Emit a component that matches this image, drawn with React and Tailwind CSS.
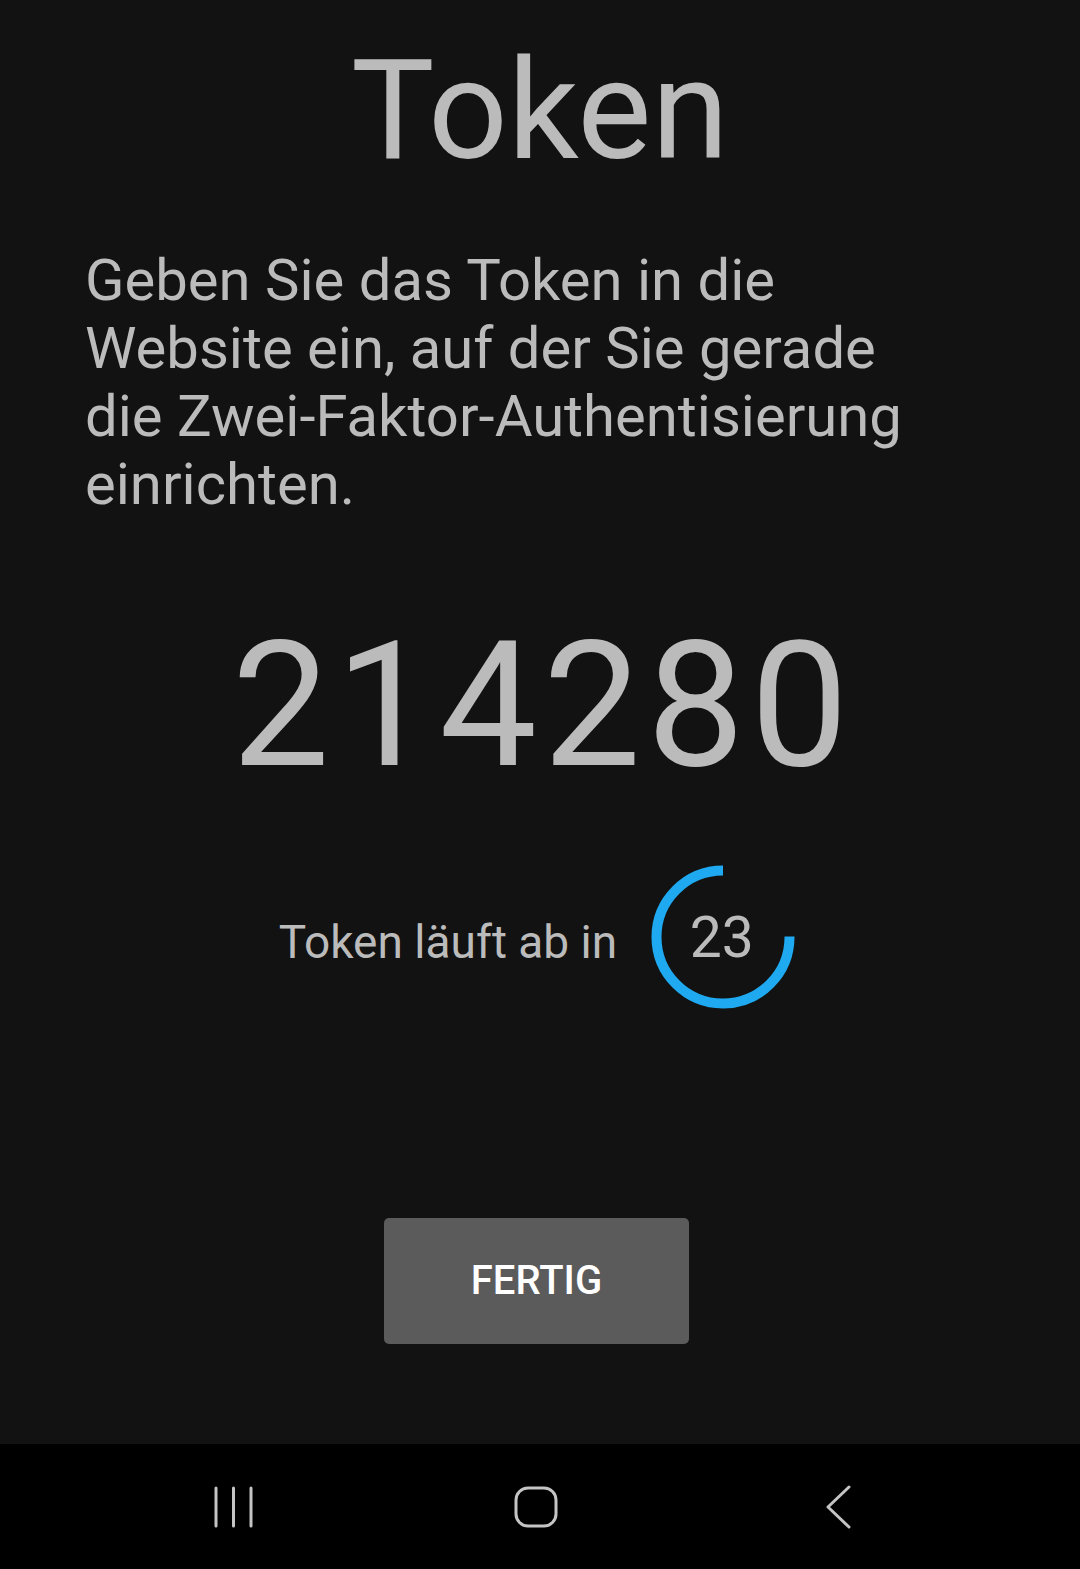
import { useState } from 'react'

const total = 30

function Countdown({ seconds }) {
  const r = 66.5
  const c = 2 * Math.PI * r
  return (
    <div className="relative w-[144px] h-[144px] shrink-0">
      <svg width="144" height="144" viewBox="0 0 144 144" className="block">
        {/* arc runs counter-clockwise from 12 o'clock */}
        <circle
          cx="72"
          cy="72"
          r={r}
          fill="none"
          stroke="#1ea9f0"
          strokeWidth="10"
          strokeDasharray={`${c * 0.75} ${c}`}
          transform="rotate(-90 72 72) scale(1 -1) translate(0 -144)"
        />
      </svg>
      <div className="absolute inset-0 flex items-center justify-center pr-[3px] text-[57px] leading-none text-[#bbbbbb]">
        {seconds}
      </div>
    </div>
  )
}

export default function App() {
  const [seconds] = useState(23)

  return (
    <div
      className="w-[1080px] h-[1569px] bg-[#121212] flex flex-col text-[#bbbbbb] overflow-hidden"
      style={{ fontFamily: 'Roboto, "Noto Sans", sans-serif' }}
    >
      <main className="flex-1 flex flex-col">
        <h1 className="pt-[40px] text-center text-[140px] leading-none font-normal">Token</h1>

        <p className="mt-[66px] ml-[85px] w-[860px] text-[58px] leading-[68px]">
          Geben Sie das Token in die Website ein, auf der Sie gerade die Zwei-Faktor-Authentisierung einrichten.
        </p>

        <div className="mt-[101px] pl-[6px] text-center text-[174px] leading-none tracking-[6px]">214280</div>

        <div className="mt-[72px] flex items-center justify-center gap-[34px] pr-[6px]">
          <span className="text-[46px] leading-none pt-[10px]">Token läuft ab in</span>
          <Countdown seconds={seconds} />
        </div>

        <div className="mt-[209px] flex justify-center pr-[7px]">
          <button className="w-[305px] h-[126px] rounded-[5px] bg-[#5b5b5c] text-white text-[40px] font-medium leading-none">
            FERTIG
          </button>
        </div>
      </main>

      <nav className="h-[125px] bg-black">
        <div className="ml-[81px] w-[909px] h-full grid grid-cols-3 items-center">
          <div className="flex justify-center">
            <svg width="40" height="44" viewBox="0 0 40 44" fill="none" stroke="#c4c4c4" strokeWidth="3" strokeLinecap="round">
              <path d="M3 3v38M20.5 3v38M38 3v38" />
            </svg>
          </div>
          <div className="flex justify-center">
            <svg width="44" height="42" viewBox="0 0 44 42" fill="none" stroke="#c4c4c4" strokeWidth="3">
              <rect x="2" y="2" width="40" height="38" rx="12" />
            </svg>
          </div>
          <div className="flex justify-center">
            <svg width="28" height="44" viewBox="0 0 28 44" fill="none" stroke="#c4c4c4" strokeWidth="3" strokeLinecap="round" strokeLinejoin="round">
              <path d="M24 2L3 22l21 20" />
            </svg>
          </div>
        </div>
      </nav>
    </div>
  )
}
